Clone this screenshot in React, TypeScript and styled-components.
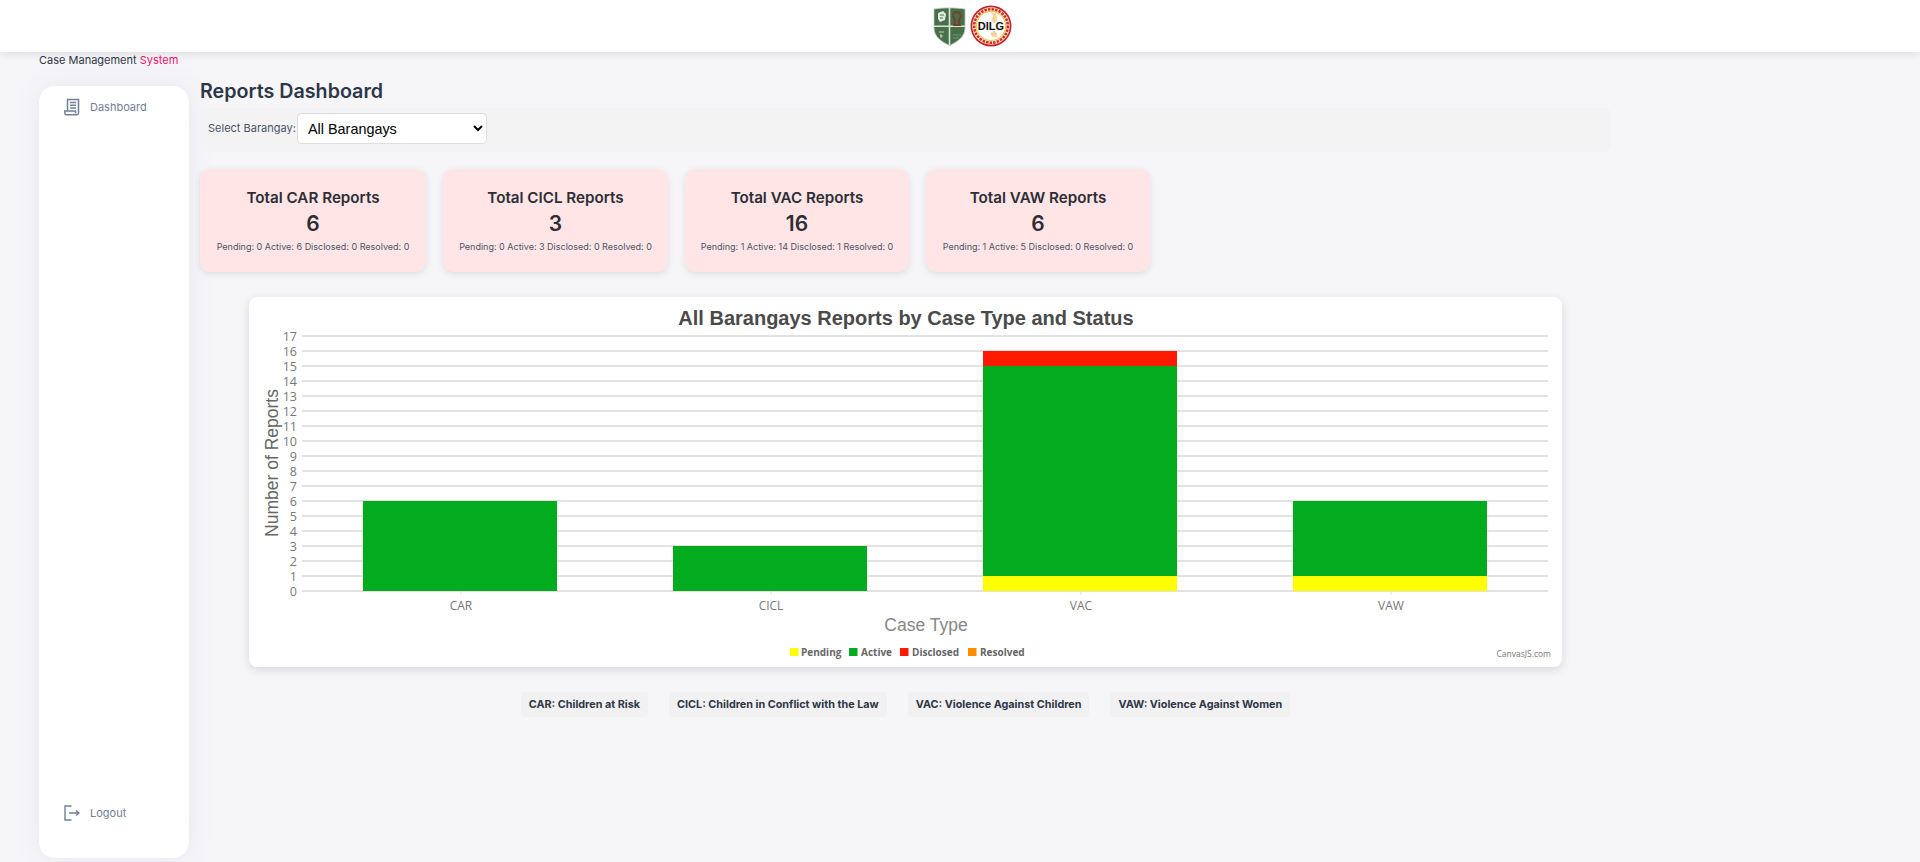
import styled, { createGlobalStyle } from "styled-components";

const GlobalStyle = createGlobalStyle`
  html, body {
    margin: 0;
    height: 862px;
    overflow: hidden;
    background: #f6f6f9;
    font-family: Inter, "Noto Sans", sans-serif;
    color: #2d3748;
  }
  * { box-sizing: border-box; }
`;

const TopBar = styled.header`
  height: 52px;
  background: #fff;
  box-shadow: 0 2px 8px rgba(40, 40, 70, 0.12);
  display: flex;
  justify-content: center;
  align-items: center;
  gap: 4px;
  padding: 0 0 0 24px;
  position: relative;
`;

const Brand = styled.div`
  height: 24px;
  padding: 1px 0 0 39px;
  font-size: 11px;
  line-height: 14px;
  color: #2d3748;
  span { color: #f0106e; }
`;

const Main = styled.div`
  display: flex;
  align-items: flex-start;
  padding-left: 39px;
  gap: 11px;
`;

const Sidebar = styled.aside`
  width: 150px;
  height: 772px;
  margin-top: 10px;
  background: #fff;
  border-radius: 16px;
  box-shadow: 0 0 26px rgba(90, 90, 170, 0.1);
  display: flex;
  flex-direction: column;
  justify-content: space-between;
  padding: 11px 0 35px 25px;
`;

const NavItem = styled.a`
  display: flex;
  align-items: center;
  gap: 10px;
  height: 20px;
  font-size: 11px;
  color: #718096;
`;

const Content = styled.main`
  width: 1411px;
`;

const Title = styled.h1`
  margin: 0 0 3px;
  padding-top: 1px;
  font-size: 19.7px;
  line-height: 28px;
  font-weight: 600;
  color: #2d3748;
`;

const FilterBar = styled.div`
  height: 44px;
  background: #f3f3f4;
  border-radius: 6px;
  display: flex;
  align-items: flex-start;
  padding: 5px 8px;
  gap: 0;
`;

const FilterLabel = styled.label`
  font-size: 11px;
  line-height: 31px;
  color: #4a5568;
  width: 89px;
  white-space: nowrap;
`;

const BarangaySelect = styled.select`
  width: 190px;
  height: 31px;
  padding: 0 6px 0 6px;
  border: 1px solid #dedede;
  border-radius: 4px;
  background: #fff;
  color: #000;
  font-family: "Liberation Sans", Arial, sans-serif;
  font-size: 14.4px;
`;

const CardRow = styled.div`
  display: flex;
  gap: 17px;
  margin-top: 17px;
`;

const SummaryCard = styled.section<{ $width: number }>`
  width: ${(p) => p.$width}px;
  height: 103px;
  padding-top: 19px;
  background: #ffe5e5;
  border-radius: 10px;
  box-shadow: 0 2px 6px rgba(60, 40, 40, 0.12);
  text-align: center;
`;

const CardTitle = styled.h3`
  margin: 0;
  font-size: 15.2px;
  line-height: 20px;
  font-weight: 600;
  color: #2d2d36;
`;

const CardCount = styled.div`
  font-size: 21px;
  line-height: 31px;
  font-weight: 600;
  color: #2d2d36;
`;

const CardStats = styled.p`
  margin: 1px 0 0;
  font-size: 9px;
  line-height: 14px;
  color: #4a5568;
  white-space: nowrap;
`;

const ChartColumn = styled.div`
  width: 1313px;
  margin: 25px 0 0 49px;
`;

const ChartCard = styled.section`
  height: 370px;
  background: #fff;
  border-radius: 8px;
  box-shadow: 0 3px 10px rgba(40, 40, 60, 0.14);
  overflow: hidden;
`;

const ChartSvg = styled.svg`
  display: block;
`;

const ChipRow = styled.div`
  display: flex;
  justify-content: center;
  gap: 21px;
  margin-top: 25px;
`;

const Chip = styled.div`
  height: 25px;
  padding: 0 8px;
  background: #f1f1f2;
  border-radius: 4px;
  font-size: 10.8px;
  line-height: 25px;
  font-weight: 700;
  color: #2d3748;
  white-space: nowrap;
`;

const reports = [
  { name: "CAR", total: 6, pending: 0, active: 6, disclosed: 0, resolved: 0, width: 226, center: 212 },
  { name: "CICL", total: 3, pending: 0, active: 3, disclosed: 0, resolved: 0, width: 225, center: 522 },
  { name: "VAC", total: 16, pending: 1, active: 14, disclosed: 1, resolved: 0, width: 224, center: 832 },
  { name: "VAW", total: 6, pending: 1, active: 5, disclosed: 0, resolved: 0, width: 224, center: 1142 },
];

const notes = [
  "CAR: Children at Risk",
  "CICL: Children in Conflict with the Law",
  "VAC: Violence Against Children",
  "VAW: Violence Against Women",
];

const COLORS = { pending: "#ffff00", active: "#03ab1f", disclosed: "#ff1a00", resolved: "#ff8c00" };

const legend = [
  { label: "Pending", color: COLORS.pending, x: 541, tx: 552 },
  { label: "Active", color: COLORS.active, x: 600, tx: 612 },
  { label: "Disclosed", color: COLORS.disclosed, x: 651, tx: 663 },
  { label: "Resolved", color: COLORS.resolved, x: 719, tx: 731 },
];

const ZERO_Y = 294;
const UNIT = 15;

const ShieldLogo = () => (
  <svg width="33" height="39" viewBox="0 0 33 39">
    <path d="M1 2 C10 0.500 23 0.500 32 2 L32 21 C32 30 24 35 16.500 38.500 C9 35 1 30 1 21 Z" fill="#47704a" stroke="#b9c9b6" strokeWidth="0.800" />
    <path d="M15.700 1 H17.300 V38 H15.700 Z M1 18.500 H32 V20 H1 Z" fill="#dbe5d6" />
    <path d="M5 6 L10 4 L13 7 L12 13 L7 15 L5 12 Z" fill="#e3ebde" />
    <path d="M7 8 h4 M7 11 h3" stroke="#47704a" strokeWidth="1" />
    <path d="M23.500 5 c-3 0 -4.500 3 -3 5 c1 2 1.500 3 1.500 5 l-1 3 h6 l-1 -3 c0 -2 0.500 -3 1.500 -5 c1 -2 -1 -5 -4 -5 Z" fill="none" stroke="#7a3d2c" strokeWidth="1.800" />
    <path d="M6 25 h5 M7 29 h3 M8 27 v4" stroke="#cfdccb" strokeWidth="0.900" />
    <path d="M20 28 h8 M20 31 h6" stroke="#7f9c7c" strokeWidth="0.800" />
  </svg>
);

const DilgLogo = () => (
  <svg width="42" height="42" viewBox="0 0 42 42">
    <circle cx="21" cy="21" r="20.500" fill="#c8202a" />
    <circle cx="21" cy="21" r="18.800" fill="#f7e7c0" />
    <circle cx="21" cy="21" r="16.800" fill="none" stroke="#d02a2e" strokeWidth="2.600" strokeDasharray="2.400 1.200" />
    <circle cx="21" cy="21" r="15" fill="#f3c33c" />
    <circle cx="21" cy="21" r="14" fill="#fff" />
    <path d="M21 7.500 l4 2 0 5 3 3 2 3 M24 26 l3 3 -1 3 -4 -1 -1 -3 Z M25 8 l2 7 -3 3 -2 -3 Z" fill="#f6d39a" stroke="#f6d39a" strokeWidth="1" />
    <text x="21" y="25" textAnchor="middle" fontFamily="Liberation Sans, sans-serif" fontWeight="700" fontSize="11" fill="#111">
      DILG
    </text>
  </svg>
);

const ScrollIcon = () => (
  <svg width="16" height="18" viewBox="0 0 16 18" fill="none" stroke="#718096" strokeWidth="1.500">
    <path d="M3.500 13 V1.500 H14.500 V15 C14.500 16 13.800 16.700 13 16.700 H2.500 C1.500 16.700 0.800 16 0.800 15 V13 H11.500 V15.500" />
    <path d="M6 4.500 H12 M6 7.300 H12 M6 10 H12" />
  </svg>
);

const LogoutIcon = () => (
  <svg width="16" height="16" viewBox="0 0 16 16" fill="none" stroke="#718096" strokeWidth="1.400">
    <path d="M7.500 1 H1 V15 H7.500" />
    <path d="M5 8 H15 M12 5.500 L15 8 L12 10.500" />
  </svg>
);

const ReportsChart = () => (
  <ChartSvg width="1313" height="370" viewBox="0 0 1313 370">
    <text x="657" y="28" textAnchor="middle" fontFamily="Liberation Sans, sans-serif" fontWeight="700" fontSize="20" fill="#4a4a4a">
      All Barangays Reports by Case Type and Status
    </text>
    {Array.from({ length: 18 }, (_, i) => {
      const y = ZERO_Y - i * UNIT;
      return (
        <g key={i}>
          <line x1="53" x2="1299" y1={y} y2={y} stroke="#d9d9d9" strokeWidth="1.500" />
          <text x="48" y={y + 4.500} textAnchor="end" fontFamily="Open Sans, sans-serif" fontSize="12.500" fill="#777">
            {i}
          </text>
        </g>
      );
    })}
    {reports.map((r) => {
      const left = r.center - 98;
      const active = ZERO_Y - (r.pending + r.active) * UNIT;
      return (
        <g key={r.name}>
          <line x1={r.center} x2={r.center} y1={ZERO_Y} y2={ZERO_Y + 4} stroke="#d9d9d9" strokeWidth="1" />
          {r.disclosed > 0 && <rect x={left} y={active - r.disclosed * UNIT} width="194" height={r.disclosed * UNIT} fill={COLORS.disclosed} />}
          <rect x={left} y={active} width="194" height={r.active * UNIT} fill={COLORS.active} />
          {r.pending > 0 && <rect x={left} y={ZERO_Y - r.pending * UNIT} width="194" height={r.pending * UNIT} fill={COLORS.pending} />}
          <text x={r.center} y={313} textAnchor="middle" fontFamily="Open Sans, sans-serif" fontSize="12" fill="#777">
            {r.name}
          </text>
        </g>
      );
    })}
    <text transform="translate(29 166) rotate(-90)" textAnchor="middle" fontFamily="Liberation Sans, sans-serif" fontSize="17.500" fill="#666">
      Number of Reports
    </text>
    <text x="677" y="334" textAnchor="middle" fontFamily="Liberation Sans, sans-serif" fontSize="17.500" fill="#888">
      Case Type
    </text>
    {legend.map((l) => (
      <g key={l.label}>
        <rect x={l.x} y="351" width="8.500" height="8" fill={l.color} />
        <text x={l.tx} y="359" fontFamily="Open Sans, sans-serif" fontWeight="700" fontSize="10" fill="#666">
          {l.label}
        </text>
      </g>
    ))}
    <text x="1302" y="360" textAnchor="end" fontFamily="Open Sans, sans-serif" fontSize="8.500" fill="#777">
      CanvasJS.com
    </text>
  </ChartSvg>
);

export default function App() {
  return (
    <>
      <GlobalStyle />
      <TopBar>
        <ShieldLogo />
        <DilgLogo />
      </TopBar>
      <Brand>
        Case Management <span>System</span>
      </Brand>
      <Main>
        <Sidebar>
          <NavItem>
            <ScrollIcon />
            Dashboard
          </NavItem>
          <NavItem>
            <LogoutIcon />
            Logout
          </NavItem>
        </Sidebar>
        <Content>
          <Title>Reports Dashboard</Title>
          <FilterBar>
            <FilterLabel htmlFor="barangay">Select Barangay:</FilterLabel>
            <BarangaySelect id="barangay" defaultValue="all">
              <option value="all">All Barangays</option>
            </BarangaySelect>
          </FilterBar>
          <CardRow>
            {reports.map((r) => (
              <SummaryCard key={r.name} $width={r.width}>
                <CardTitle>Total {r.name} Reports</CardTitle>
                <CardCount>{r.total}</CardCount>
                <CardStats>
                  Pending: {r.pending} Active: {r.active} Disclosed: {r.disclosed} Resolved: {r.resolved}
                </CardStats>
              </SummaryCard>
            ))}
          </CardRow>
          <ChartColumn>
            <ChartCard>
              <ReportsChart />
            </ChartCard>
            <ChipRow>
              {notes.map((n) => (
                <Chip key={n}>{n}</Chip>
              ))}
            </ChipRow>
          </ChartColumn>
        </Content>
      </Main>
    </>
  );
}
